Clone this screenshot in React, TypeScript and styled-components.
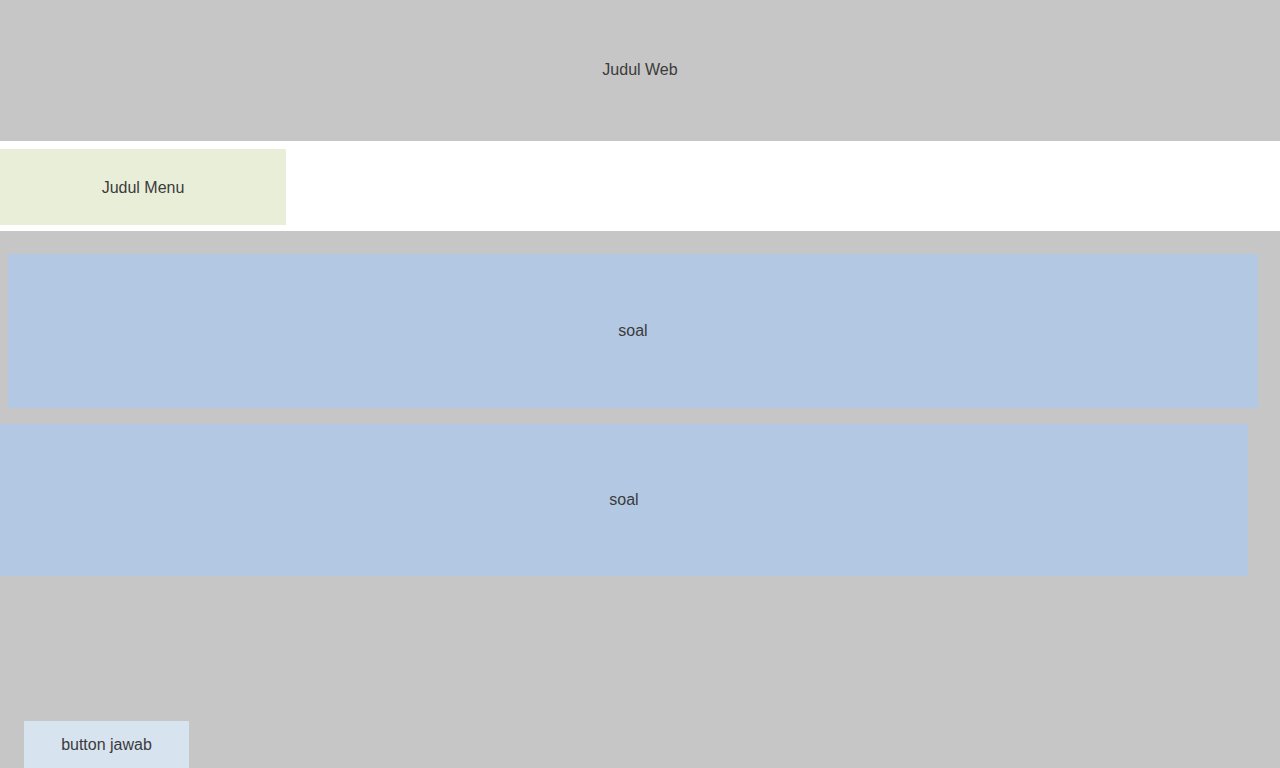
import React from "react";
import styled, { createGlobalStyle } from "styled-components";

const Global = createGlobalStyle`
  html, body { margin: 0; padding: 0; background: #ffffff; }
  body { font-family: "Liberation Sans", Arial, Helvetica, sans-serif; font-size: 16px; color: #3b3b3b; }
`;

const Header = styled.header`
  height: 141px;
  background: #c6c6c6;
  display: flex;
  align-items: center;
  justify-content: center;
  padding-bottom: 1px;
  box-sizing: border-box;
`;

const Nav = styled.nav`
  background: #ffffff;
  padding: 8px 0 6px;
`;

const MenuTitle = styled.div`
  width: 286px;
  height: 76px;
  background: #e9eed9;
  display: flex;
  align-items: center;
  justify-content: center;
  padding-top: 2px;
  box-sizing: border-box;
`;

const Main = styled.main`
  background: #c6c6c6;
  padding-top: 23px;
  min-height: 537px;
  box-sizing: border-box;
  display: flex;
  flex-direction: column;
`;

const Soal = styled.div<{ $offset: number; $width: number; $height: number }>`
  margin-left: ${(p) => p.$offset}px;
  width: ${(p) => p.$width}px;
  height: ${(p) => p.$height}px;
  background: #b3c9e3;
  display: flex;
  align-items: center;
  justify-content: center;
`;

const SoalList = styled.div`
  display: flex;
  flex-direction: column;
  gap: 16px;
`;

const AnswerButton = styled.button`
  margin: 145px 0 0 24px;
  width: 165px;
  height: 47px;
  border: none;
  background: #d7e3ef;
  font-family: inherit;
  font-size: 16px;
  color: #3b3b3b;
  padding: 0;
  display: flex;
  align-items: center;
  justify-content: center;
`;

export default function App() {
  return (
    <>
      <Global />
      <Header>Judul Web</Header>
      <Nav>
        <MenuTitle>Judul Menu</MenuTitle>
      </Nav>
      <Main>
        <SoalList>
          <Soal $offset={8} $width={1250} $height={154}>soal</Soal>
          <Soal $offset={0} $width={1248} $height={152}>soal</Soal>
        </SoalList>
        <AnswerButton>button jawab</AnswerButton>
      </Main>
    </>
  );
}
